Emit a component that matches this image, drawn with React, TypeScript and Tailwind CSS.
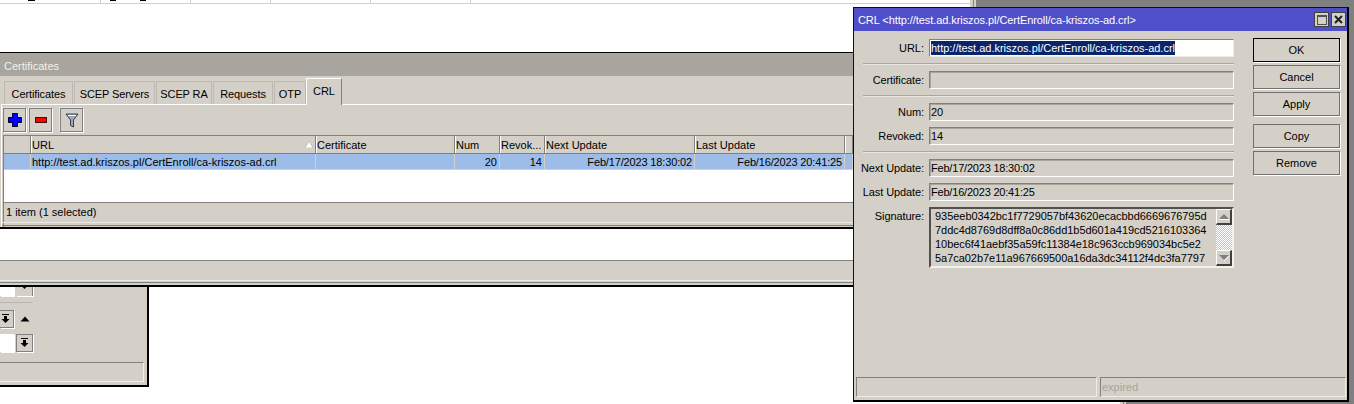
import React from "react";

const FONT = "font-['Liberation_Sans',Arial,sans-serif]";

function DoubleEdge() {
  return (
    <div className="flex h-full w-[6px] shrink-0">
      <div className="w-[3px] bg-[#d4d0c8]" />
      <div className="w-px bg-[#808080]" />
      <div className="w-[2px] bg-[#d4d0c8]" />
    </div>
  );
}

function Tab({ label, w, gap = true }: { label: string; w: string; gap?: boolean }) {
  return (
    <div className={`${w} ${gap ? "mr-px" : ""} h-[23px] flex items-center justify-center border-t border-r border-l border-[#bdb9b0] pt-[1px] tracking-[-0.1px]`}>
      {label}
    </div>
  );
}

function ToolButton({ w, children, className = "" }: { w: string; children: React.ReactNode; className?: string }) {
  return (
    <div className={`${w} h-[24px] flex items-center justify-center border border-[#808080] shadow-[1px_1px_0_#fff,-1px_-1px_0_#e8e6e0] ${className}`}>
      {children}
    </div>
  );
}

const columns: { w: string; head: string; cell: string; right?: boolean; tight?: boolean }[] = [
  { w: "w-[27px]", head: "", cell: "" },
  { w: "w-[285px]", head: "URL", cell: "http://test.ad.kriszos.pl/CertEnroll/ca-kriszos-ad.crl" },
  { w: "w-[139px]", head: "Certificate", cell: "" },
  { w: "w-[45px]", head: "Num", cell: "20", right: true },
  { w: "w-[45px]", head: "Revok...", cell: "14", right: true },
  { w: "w-[150px]", head: "Next Update", cell: "Feb/17/2023 18:30:02", right: true, tight: true },
  { w: "w-[150px]", head: "Last Update", cell: "Feb/16/2023 20:41:25", right: true, tight: true },
  { w: "w-[8px]", head: "", cell: "" },
];

function DownBar({ className = "" }: { className?: string }) {
  return (
    <svg width="9" height="10" viewBox="0 0 9 10" className={className}>
      <rect x="1" y="0" width="7" height="1" fill="#000" />
      <rect x="3" y="2" width="3" height="3" fill="#000" />
      <path d="M0.5 5H8.5L4.5 9Z" fill="#000" />
    </svg>
  );
}

function Field({ label, value, tight }: { label: string; value?: string; tight?: boolean }) {
  return (
    <div className="flex h-[18px] items-center">
      <div className="w-[70px] text-right tracking-[-0.1px] whitespace-nowrap">{label}</div>
      <div className="w-[5px]" />
      <div className={`w-[305px] h-[18px] flex items-center pl-[1px] border border-t-[#808080] border-l-[#808080] border-r-white border-b-white shadow-[inset_1px_1px_0_#a8a59e] ${tight ? "tracking-[-0.2px]" : ""}`}>
        {value}
      </div>
    </div>
  );
}

function Sep() {
  return <div className="my-[6px] ml-[9px] w-[371px] h-[2px] border-t border-[#a9a69e] border-b border-b-[#e8e6e0]" />;
}

function DialogButton({ label, className = "", color = "border-[#707070]" }: { label: string; className?: string; color?: string }) {
  return (
    <div className={`w-[87px] h-[24px] flex items-center justify-center border ${color} shadow-[1px_1px_0_#fff] ${className}`}>
      {label}
    </div>
  );
}

function ScrollArrow({ down }: { down?: boolean }) {
  return (
    <div className="w-[16px] h-[16px] flex items-center justify-center bg-[#d4d0c8] border-t border-l border-white border-r-2 border-b-2 border-r-[#404040] border-b-[#404040]">
      <svg width="10" height="6" viewBox="0 0 10 6">
        {down ? <path d="M0 0H10L5 5Z" fill="#808080" /> : <path d="M5 0L10 5H0Z" fill="#808080" />}
        <path d={down ? "M5 6L10 1" : "M0 5.5H10"} stroke="#fff" strokeWidth="1" />
      </svg>
    </div>
  );
}

const signature = [
  "935eeb0342bc1f7729057bf43620ecacbbd6669676795d",
  "7ddc4d8769d8dff8a0c86dd1b5d601a419cd5216103364",
  "10bec6f41aebf35a59fc11384e18c963ccb969034bc5e2",
  "5a7ca02b7e11a967669500a16da3dc34112f4dc3fa7797",
];

export default function App() {
  return (
    <div className={`relative w-[1354px] h-[404px] overflow-hidden bg-[#808080] text-[11px] leading-[14px] text-black ${FONT}`}>
      {/* back window, upper */}
      <div className="absolute left-0 top-0 w-[976px] h-[300px] flex">
        <div className="relative flex-1 bg-white">
          <div className="h-[3px] flex">
            <div className="w-[101px] border-r border-[#d4d0c8]" />
            <div className="w-[90px] border-r border-[#d4d0c8]" />
            <div className="w-[80px] border-r border-[#d4d0c8]" />
            <div className="w-[100px] border-r border-[#d4d0c8]" />
            <div className="w-[100px] border-r border-[#d4d0c8]" />
          </div>
          <div className="h-px bg-[#d4d0c8]" />
          <div className="absolute left-[28px] top-0 w-[7px] h-px bg-black" />
          <div className="absolute left-[110px] top-0 w-[6px] h-px bg-black" />
          <div className="absolute left-[140px] top-0 w-[6px] h-px bg-black" />
        </div>
        <DoubleEdge />
      </div>

      {/* back window, lower */}
      <div className="absolute left-0 top-[300px] w-[1126px] h-[104px] flex">
        <div className="flex-1 bg-white" />
        <DoubleEdge />
      </div>

      {/* left lower window */}
      <div className="absolute left-0 top-[270px] w-[149px] h-[117px] bg-[#d4d0c8] border-r-2 border-b-2 border-black">
        <div className="flex items-stretch h-[26px]">
          <div className="w-[14px] bg-white shadow-[1px_1px_0_#fff]" />
          <div className="ml-[2px] w-[17px] flex items-end justify-center bg-[#d4d0c8] border-r border-[#808080] shadow-[1px_1px_0_#fff]">
            <DownBar className="mb-[6px]" />
          </div>
        </div>
        <div className="mt-[6px] w-[32px] h-px bg-[#b8b5ae]" />
        <div className="mt-[7px] h-[18px] flex items-center">
          <div className="w-[14px] h-[18px] flex items-center justify-center border-r border-b border-t border-[#808080] shadow-[1px_1px_0_#fff]">
            <DownBar className="ml-[-3px]" />
          </div>
          <svg width="10" height="6" viewBox="0 0 10 6" className="ml-[6px]">
            <path d="M5 0.5L9.5 5.5H0.5Z" fill="#000" />
          </svg>
        </div>
        <div className="mt-[6px] h-[18px] flex">
          <div className="w-[14px] bg-white shadow-[1px_1px_0_#fff]" />
          <div className="ml-[2px] w-[17px] flex items-center justify-center border border-[#808080] shadow-[1px_1px_0_#fff]">
            <DownBar />
          </div>
        </div>
        <div className="mt-[10px] w-[144px] h-[20px] border-t border-t-[#808080] border-r border-r-[#f0eee8] border-b border-b-[#f0eee8]" />
      </div>

      {/* strip window */}
      <div className="absolute left-0 top-[260px] w-[853px] h-[27px] bg-[#d4d0c8] border-t border-[#808080] border-b-2 border-b-black">
        <div className="mt-[19px] h-[1px] bg-[#eceae4]" />
        <div className="mt-[1px] h-[1px] bg-[#808080]" />
      </div>

      {/* Certificates window */}
      <div className="absolute left-0 top-[52px] w-[853px] h-[177px] flex flex-col bg-[#d4d0c8] border-t border-b-2 border-black">
        <div className="h-[23px] shrink-0 flex items-center pl-[4px] pt-[3px] bg-[#a8a59e] text-[#f2f1ed]">Certificates</div>
        <div className="h-[28px] shrink-0 pl-[4px] flex items-end relative">
          <Tab label="Certificates" w="w-[69px]" />
          <Tab label="SCEP Servers" w="w-[81px]" />
          <Tab label="SCEP RA" w="w-[56px]" />
          <Tab label="Requests" w="w-[60px]" />
          <Tab label="OTP" w="w-[32px]" gap={false} />
          <div className="relative z-10 w-[36px] h-[27px] mb-[-1px] flex items-center justify-center bg-[#d4d0c8] border-t border-l border-white border-r border-r-[#808080] pb-[3px]">CRL</div>
        </div>
        <div className="flex-1 flex flex-col border-t border-l border-white ml-[1px]">
          <div className="h-[30px] shrink-0 pt-[3px] pl-[1px] flex">
            <ToolButton w="w-[23px]">
              <svg width="14" height="14" viewBox="0 0 14 14">
                <path d="M4.5 .5H9.5V4.5H13.5V9.5H9.5V13.5H4.5V9.5H.5V4.5H4.5Z" fill="#0000ff" stroke="#000030" strokeWidth="1" />
              </svg>
            </ToolButton>
            <ToolButton w="w-[23px]" className="ml-[3px]">
              <svg width="14" height="6" viewBox="0 0 14 6">
                <rect x="1.5" y="0.5" width="11" height="5" fill="#ff0000" stroke="#401010" strokeWidth="1" />
              </svg>
            </ToolButton>
            <ToolButton w="w-[23px]" className="ml-[8px]">
              <svg width="14" height="15" viewBox="0 0 14 15">
                <path d="M1 1H13L8.5 7V14L5.5 12.5V7Z" fill="#9aa6c4" stroke="#3c4048" strokeWidth="1" />
                <path d="M3 2.5H11" stroke="#fff" strokeWidth="1" />
              </svg>
            </ToolButton>
          </div>
          <div className="ml-[1px] flex-1 flex flex-col border-l border-[#808080]">
            <div className="h-[19px] shrink-0 flex border-t border-b border-[#808080]">
              {columns.map((c, i) => (
                <div key={i} className={`${c.w} shrink-0 relative flex items-center pl-[1px] border-r border-[#808080] shadow-[1px_0_0_#fff]`}>
                  {c.head}
                  {i === 1 && (
                    <svg width="8" height="7" viewBox="0 0 8 7" className="absolute right-[2px] top-[5px]">
                      <path d="M4 0L8 7H0Z" fill="#fff" stroke="#b0ada5" strokeWidth="0.6" />
                    </svg>
                  )}
                </div>
              ))}
              <div className="flex-1" />
            </div>
            <div className="h-[48px] shrink-0 bg-white">
              <div className="h-[16px] flex bg-[#9dbde8] border-b border-[#d4d0c8]">
                {columns.map((c, i) => (
                  <div key={i} className={`${c.w} shrink-0 flex items-center pl-[1px] border-r border-[#d4d0c8] ${c.right ? "justify-end pr-[2px]" : ""} ${c.tight ? "tracking-[-0.15px]" : ""}`}>
                    {c.cell}
                  </div>
                ))}
              </div>
            </div>
            <div className="h-[20px] shrink-0 flex items-center pl-[2px] pb-[2px] border-t border-[#808080]">1 item (1 selected)</div>
            <div className="h-px bg-[#eceae4] ml-[-2px]" />
            <div className="h-[2px]" />
            <div className="h-px bg-[#808080] ml-[-2px]" />
          </div>
        </div>
      </div>

      {/* CRL dialog */}
      <div className="absolute left-[853px] top-[7px] w-[496px] h-[395px] flex flex-col bg-[#d4d0c8] border border-[#101010] border-r-2 border-b-2 border-r-black border-b-black">
        <div className="h-[23px] shrink-0 flex items-center bg-[#4f50c9] pl-[4px] pr-px text-white">
          <span className="flex-1 tracking-[-0.07px]">CRL &lt;http://test.ad.kriszos.pl/CertEnroll/ca-kriszos-ad.crl&gt;</span>
          <div className="w-[15px] h-[15px] flex items-center justify-center bg-[#d4d0c8] border border-[#404040]">
            <div className="w-[10px] h-[10px] border border-[#505050] border-t-2" />
          </div>
          <div className="ml-[2px] w-[15px] h-[15px] flex items-center justify-center bg-[#d4d0c8] border border-[#404040]">
            <svg width="9" height="9" viewBox="0 0 9 9">
              <path d="M1 1L8 8M8 1L1 8" stroke="#202020" strokeWidth="2" />
            </svg>
          </div>
        </div>
        <div className="flex-1 flex">
          <div className="w-[399px] pt-[8px]">
            <div className="flex h-[18px] items-center">
              <div className="w-[70px] text-right">URL:</div>
              <div className="w-[5px]" />
              <div className="w-[305px] h-[18px] flex items-center pl-[1px] bg-white border border-t-[#808080] border-l-[#808080] border-r-[#eeece6] border-b-[#eeece6]">
                <span className="bg-[#0a246a] text-white tracking-[-0.01px]">http://test.ad.kriszos.pl/CertEnroll/ca-kriszos-ad.crl</span>
              </div>
            </div>
            <Sep />
            <Field label="Certificate:" />
            <Sep />
            <div className="flex flex-col gap-[6px]">
              <Field label="Num:" value="20" />
              <Field label="Revoked:" value="14" />
            </div>
            <Sep />
            <div className="flex flex-col gap-[6px]">
              <Field label="Next Update:" value="Feb/17/2023 18:30:02" tight />
              <Field label="Last Update:" value="Feb/16/2023 20:41:25" tight />
              <div className="flex items-start">
                <div className="w-[70px] text-right mt-[2px] tracking-[-0.1px]">Signature:</div>
                <div className="w-[5px]" />
                <div className="w-[305px] h-[61px] flex border-2 border-t-[#505050] border-l-[#505050] border-r-[#f4f2ec] border-b-[#f4f2ec]">
                  <div className="flex-1 pl-[4px] whitespace-nowrap overflow-hidden tracking-[-0.04px]">
                    {signature.map((s) => (
                      <div key={s} className="h-[14px]">{s}</div>
                    ))}
                  </div>
                  <div className="w-[16px] flex flex-col justify-between bg-[#d4d0c8] bg-[repeating-conic-gradient(#ffffff_0_25%,#c8c5bd_0_50%)] bg-[length:2px_2px]">
                    <ScrollArrow />
                    <ScrollArrow down />
                  </div>
                </div>
              </div>
            </div>
          </div>
          <div className="pt-[7px] flex flex-col">
            <DialogButton label="OK" color="border-black" />
            <DialogButton label="Cancel" className="mt-[3px]" />
            <DialogButton label="Apply" className="mt-[3px]" />
            <DialogButton label="Copy" className="mt-[8px]" />
            <DialogButton label="Remove" className="mt-[3px]" />
          </div>
        </div>
        <div className="h-[20px] shrink-0 mb-[3px] ml-[2px] flex gap-[3px]">
          <div className="w-[241px] border-t border-l border-[#808080] border-r border-r-[#eeece6] border-b border-b-[#eeece6]" />
          <div className="w-[246px] pl-[1px] flex items-center text-[#a8a49c] border-t border-l border-[#808080] border-r border-r-[#eeece6] border-b border-b-[#eeece6]">expired</div>
        </div>
      </div>
    </div>
  );
}
